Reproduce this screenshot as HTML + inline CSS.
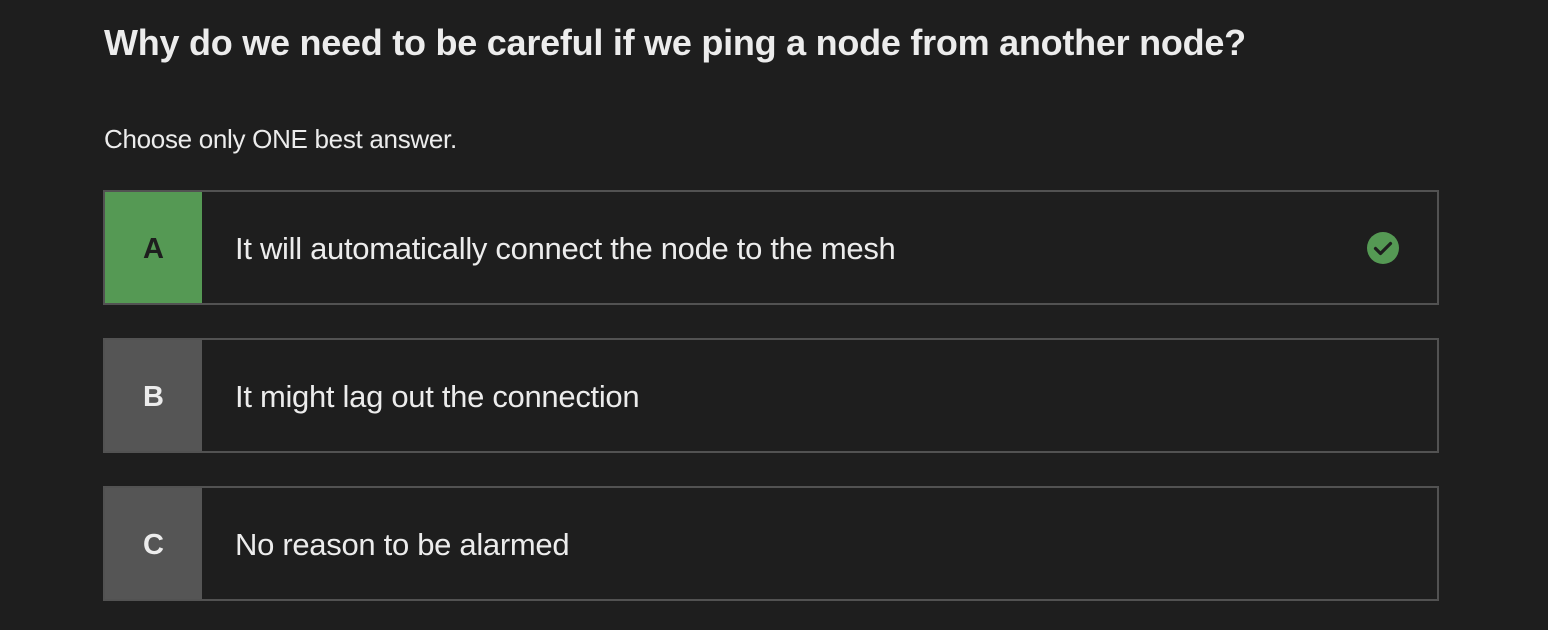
<!DOCTYPE html>
<html><head><style>
body{margin:0;width:1548px;height:630px;background:#1e1e1e;font-family:"Liberation Sans",sans-serif;color:#ececec;overflow:hidden;position:relative}
h1{position:absolute;left:104px;top:22px;margin:0;font-size:36px;font-weight:bold;letter-spacing:-0.25px}
.sub{position:absolute;left:104px;top:124px;font-size:26px;letter-spacing:-0.3px}
.opt{position:absolute;left:103px;width:1332px;height:111px;border:2px solid #525252;box-sizing:content-box}
.l{position:absolute;left:0;top:2px;width:97px;height:111px;background:#555;color:#ececec;font-size:29px;font-weight:bold;display:flex;align-items:center;justify-content:center}
.l{top:0;padding-top:3px;box-sizing:border-box}
.g .l{background:#559954;color:#1e1e1e}
.t{position:absolute;left:130px;top:1px;line-height:111px;font-size:31px;letter-spacing:-0.3px}
svg{position:absolute;left:1262px;top:40px}
</style></head><body>
<h1>Why do we need to be careful if we ping a node from another node?</h1>
<div class="sub">Choose only ONE best answer.</div>
<div class="opt g" style="top:190px"><div class="l">A</div><div class="t">It will automatically connect the node to the mesh</div>
<svg width="32" height="32" viewBox="0 0 32 32"><circle cx="16" cy="16" r="16" fill="#559954"/><path d="M8.5 16.5l5 5 10-10" stroke="#1e1e1e" stroke-width="3.2" fill="none" stroke-linecap="round" stroke-linejoin="round"/></svg></div>
<div class="opt" style="top:338px"><div class="l">B</div><div class="t">It might lag out the connection</div></div>
<div class="opt" style="top:486px"><div class="l">C</div><div class="t">No reason to be alarmed</div></div>
</body></html>
